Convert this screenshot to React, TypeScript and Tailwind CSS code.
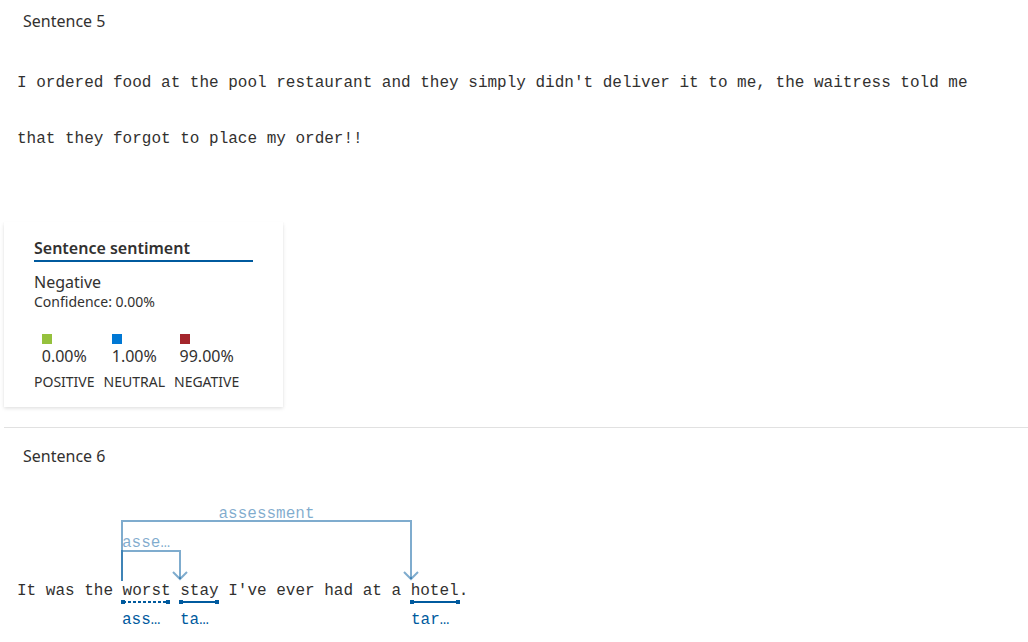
import React from "react";

const SANS = "font-['Segoe_UI','Noto_Sans','Open_Sans',sans-serif]";
const MONO = "font-['Liberation_Mono','DejaVu_Sans_Mono',monospace]";

function Diagram() {
  const light = "#005a9e";
  return (
    <svg
      className="absolute left-0 top-0"
      width="1028"
      height="150"
      viewBox="0 0 1028 150"
      fill="none"
    >
      <g stroke={light} strokeOpacity="0.5" strokeWidth="2">
        <path d="M122 90 V30 H411 V88" />
        <path d="M404 81 L411 88 L418 81" />
        <path d="M122 90 V60 H180 V88" />
        <path d="M173 81 L180 88 L187 81" />
      </g>
      <g
        fontFamily="'Liberation Mono','DejaVu Sans Mono',monospace"
        fontSize="16"
      >
        <text x="266.5" y="27" textAnchor="middle" fill={light} fillOpacity="0.5">
          assessment
        </text>
        <text x="122" y="56" fill={light} fillOpacity="0.5">
          asse…
        </text>
        <text x="122" y="133" fill={light}>
          ass…
        </text>
        <text x="180" y="133" fill={light}>
          ta…
        </text>
        <text x="411" y="133" fill={light}>
          tar…
        </text>
      </g>
      <g stroke={light} strokeWidth="2">
        <path d="M123 111 H168" strokeDasharray="3 2" />
        <path d="M181 111 H217" />
        <path d="M412 111 H457" />
      </g>
      <g fill={light}>
        <rect x="121" y="109" width="4" height="4" />
        <rect x="166" y="109" width="4" height="4" />
        <rect x="179" y="109" width="4" height="4" />
        <rect x="215" y="109" width="4" height="4" />
        <rect x="410" y="109" width="4" height="4" />
        <rect x="456" y="109" width="4" height="4" />
      </g>
    </svg>
  );
}

function Stat({
  color,
  value,
  label,
}: {
  color: string;
  value: string;
  label: string;
}) {
  return (
    <div className="flex flex-col items-center">
      <div className="flex flex-col items-start">
        <div className={`h-[10px] w-[10px] ${color}`} />
        <div className="mt-[1px] text-[16px] leading-[22px]">{value}</div>
      </div>
      <div className="mt-[5px] text-[14px] leading-[20px] uppercase">{label}</div>
    </div>
  );
}

export default function App() {
  return (
    <div className={`w-[1028px] h-[642px] bg-white text-[#323130] overflow-hidden ${SANS}`}>
      <div className="pl-[23px] pt-[9px] text-[16px] leading-[24px]">Sentence 5</div>
      <p className={`${MONO} mt-[22px] pl-[17px] w-[990px] text-[16px] leading-[56px] text-[#323130]`}>
        I ordered food at the pool restaurant and they simply didn't deliver it to me, the waitress told me that they forgot to place my order!!
      </p>
      <div className="mt-[55px] ml-[4px] w-[279px] h-[185px] bg-white shadow-[0_1.6px_3.6px_rgba(0,0,0,0.13),0_0.3px_0.9px_rgba(0,0,0,0.11)] pl-[30px] pt-[15px]">
        <div className="w-[219px] border-b-2 border-[#005a9e] text-[16px] leading-[22px] font-semibold pb-[1px]">
          Sentence sentiment
        </div>
        <div className="mt-[9px] text-[16px] leading-[22px]">Negative</div>
        <div className="text-[14px] leading-[18px]">Confidence: 0.00%</div>
        <div className="mt-[23px] flex gap-[9px]">
          <Stat color="bg-[#95c13d]" value="0.00%" label="Positive" />
          <Stat color="bg-[#0078d4]" value="1.00%" label="Neutral" />
          <Stat color="bg-[#a4262c]" value="99.00%" label="Negative" />
        </div>
      </div>
      <div className="mt-[20px] ml-[4px] border-t border-[#e1e1e1]" />
      <div className="pl-[23px] pt-[16px] text-[16px] leading-[24px]">Sentence 6</div>
      <div className="relative mt-[23px] h-[150px]">
        <Diagram />
        <p className={`${MONO} relative pt-[88px] pl-[17px] text-[16px] leading-[24px] whitespace-pre`}>
          It was the worst stay I've ever had at a hotel.
        </p>
      </div>
    </div>
  );
}
